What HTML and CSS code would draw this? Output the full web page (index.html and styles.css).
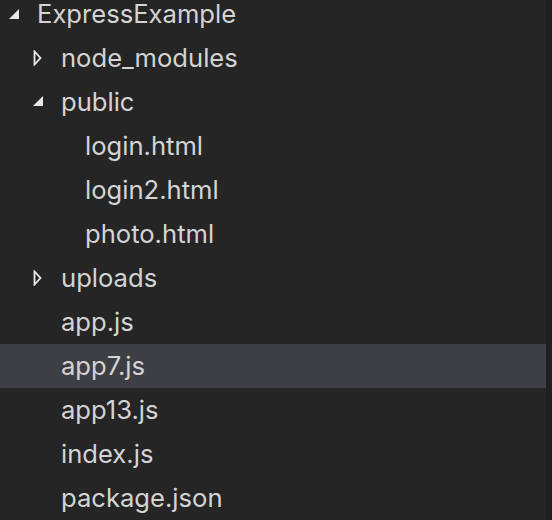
FILE: index.html
```html
<!DOCTYPE html>
<html>
<head>
<meta charset="utf-8">
<link rel="stylesheet" href="styles.css">
</head>
<body>
<div class="explorer">
  <div class="tree">
    <div class="row lvl0 top"><span class="twistie"><svg width="12" height="16" viewBox="0 0 12 16"><polygon points="10,3 10,13 0,13" class="fill"/></svg></span><span class="label">ExpressExample</span></div>
    <div class="row lvl1"><span class="twistie"><svg width="12" height="16" viewBox="0 0 12 16"><polygon points="1.5,1.5 1.5,14.5 7.5,8" class="outline"/></svg></span><span class="label">node_modules</span></div>
    <div class="row lvl1"><span class="twistie"><svg width="12" height="16" viewBox="0 0 12 16"><polygon points="10,2 10,12 0,12" class="fill"/></svg></span><span class="label">public</span></div>
    <div class="row lvl2"><span class="twistie"></span><span class="label">login.html</span></div>
    <div class="row lvl2"><span class="twistie"></span><span class="label">login2.html</span></div>
    <div class="row lvl2"><span class="twistie"></span><span class="label">photo.html</span></div>
    <div class="row lvl1"><span class="twistie"><svg width="12" height="16" viewBox="0 0 12 16"><polygon points="1.5,1.5 1.5,14.5 7.5,8" class="outline"/></svg></span><span class="label">uploads</span></div>
    <div class="row lvl1"><span class="twistie"></span><span class="label">app.js</span></div>
    <div class="row lvl1 selected"><span class="twistie"></span><span class="label">app7.js</span></div>
    <div class="row lvl1"><span class="twistie"></span><span class="label">app13.js</span></div>
    <div class="row lvl1"><span class="twistie"></span><span class="label">index.js</span></div>
    <div class="row lvl1"><span class="twistie"></span><span class="label">package.json</span></div>
  </div>
  <div class="scrollbar"></div>
</div>
</body>
</html>
```

FILE: styles.css
```css
html, body {
  margin: 0;
  padding: 0;
  background: #252526;
  overflow: hidden;
}
.explorer {
  display: flex;
  width: 552px;
  height: 520px;
  overflow: hidden;
  font-family: "Inter", "Open Sans", sans-serif;
  font-size: 25.6px;
  color: #d4d4d4;
}
.tree {
  flex: 1;
}
.scrollbar {
  width: 6px;
  background: #1f1f1f;
}
.row {
  display: flex;
  align-items: center;
  height: 44px;
  white-space: nowrap;
}
.row.top {
  height: 36px;
  align-items: flex-start;
}
.row.top .twistie { height: 28px; }
.row.top .label { line-height: 28px; }
.lvl0 { padding-left: 9px; }
.lvl1 { padding-left: 33px; }
.lvl2 { padding-left: 57px; }
.selected { background: #3e3f45; }
.twistie {
  width: 28px;
  flex: none;
  display: flex;
  align-items: center;
}
.twistie svg { display: block; }
.fill { fill: #e8e8e8; }
.outline { fill: none; stroke: #e8e8e8; stroke-width: 1.8; stroke-linejoin: miter; }
.label { line-height: 44px; }
```
